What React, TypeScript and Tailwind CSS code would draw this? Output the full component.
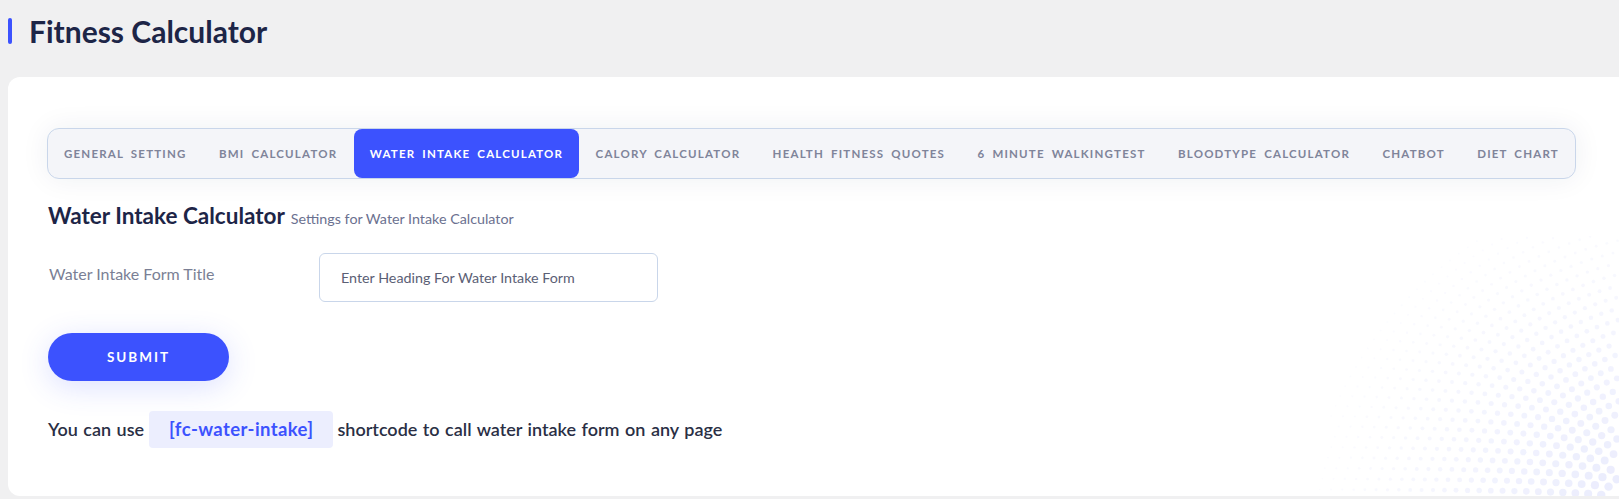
import React from 'react';

const tabs = [
  'General Setting',
  'BMI Calculator',
  'Water Intake Calculator',
  'Calory Calculator',
  'Health Fitness Quotes',
  '6 Minute WalkingTest',
  'Bloodtype Calculator',
  'Chatbot',
  'Diet Chart',
];

// halftone dots for the card corner, laid on arcs around a point past the corner
const W = 320;
const H = 260;
const dots: { x: number; y: number; r: number; o: number }[] = [];
(() => {
  const cx = W + 70;
  const cy = H + 70;
  for (let R = 80; R < 620; R += 11) {
    const step = 11 / R;
    for (let a = Math.PI; a <= Math.PI * 1.5 + 0.001; a += step) {
      const x = cx + R * Math.cos(a);
      const y = cy + R * Math.sin(a);
      if (x < 0 || y < 0 || x > W || y > H) continue;
      const d = Math.hypot(W - x, H - y);
      const t = 1 - d / 300;
      if (t <= 0) continue;
      dots.push({ x, y, r: 0.8 + 3.6 * t, o: 0.15 + 0.85 * t });
    }
  }
})();

function Halftone() {
  return (
    <svg
      className="pointer-events-none absolute bottom-0 right-0"
      width={W}
      height={H}
      viewBox={`0 0 ${W} ${H}`}
    >
      {dots.map((d, i) => (
        <circle key={i} cx={d.x} cy={d.y} r={d.r} fill="#eaecfd" opacity={d.o} />
      ))}
    </svg>
  );
}

export default function App() {
  const active = 'Water Intake Calculator';

  return (
    <div className="min-h-screen bg-[#f0f0f1] pl-2 font-['Lato','Noto_Sans',sans-serif]">
      <div className="flex h-[77px] items-start pt-[18px]">
        <span className="block h-[26px] w-[4px] rounded-full bg-[#3c52fe]" />
        <h1 className="ml-[17px] -mt-[3px] text-[30px] font-bold leading-[32px] text-[#1d2547]">
          Fitness Calculator
        </h1>
      </div>

      <div className="relative overflow-hidden rounded-l-xl bg-white pb-[48px] pl-[39px] pr-[43px] pt-[51px]">
        <Halftone />

        <div className="relative">
          <div className="flex h-[51px] items-stretch justify-between rounded-xl border border-[#c9d6ea] bg-[#f4f5f9] shadow-[0_0_28px_rgba(30,40,90,0.07)]">
            {tabs.map((t) => (
              <div
                key={t}
                className={
                  t === active
                    ? 'flex items-center whitespace-nowrap rounded-lg bg-[#3c52fe] px-4 text-[11.5px] font-bold uppercase tracking-[1.2px] text-white'
                    : 'flex items-center whitespace-nowrap px-4 text-[11.5px] font-bold uppercase tracking-[1.2px] text-[#7f849a]'
                }
              >
                <span className="[word-spacing:3px]">{t}</span>
              </div>
            ))}
          </div>

          <div className="mt-[22px] flex items-baseline gap-[6px] pl-[1px]">
            <h2 className="text-[22.5px] font-bold leading-[30px] text-[#1d2547]">Water Intake Calculator</h2>
            <span className="text-[14.3px] text-[#6b7190]">Settings for Water Intake Calculator</span>
          </div>

          <div className="mt-[22px] flex items-start">
            <label className="w-[272px] pl-[2px] pt-[10px] text-[16px] leading-[22px] text-[#7a7f95]">
              Water Intake Form Title
            </label>
            <input
              type="text"
              placeholder="Enter Heading For Water Intake Form"
              className="h-[49px] w-[339px] rounded-md border border-[#c9d6ea] bg-white px-[21px] text-[14.3px] text-[#5b6075] outline-none placeholder:text-[#5b6075]"
            />
          </div>

          <button
            type="button"
            className="ml-px mt-[31px] h-[48px] w-[181px] rounded-full bg-[#3c52fe] text-[13.5px] font-bold uppercase tracking-[2px] text-white shadow-[0_6px_30px_rgba(60,82,254,0.18)]"
          >
            Submit
          </button>

          <p className="mt-[30px] flex items-center pl-px text-[18px] font-semibold text-[#2a2f45] [word-spacing:1px]">
            <span>You can use</span>
            <code className="ml-[5px] mr-[4px] flex h-[37px] items-center rounded-sm bg-[#eceefe] px-[20px] font-['Lato',sans-serif] text-[18.5px] font-bold tracking-[0.4px] text-[#3c52fe]">
              [fc-water-intake]
            </code>
            <span>shortcode to call water intake form on any page</span>
          </p>
        </div>
      </div>
    </div>
  );
}
